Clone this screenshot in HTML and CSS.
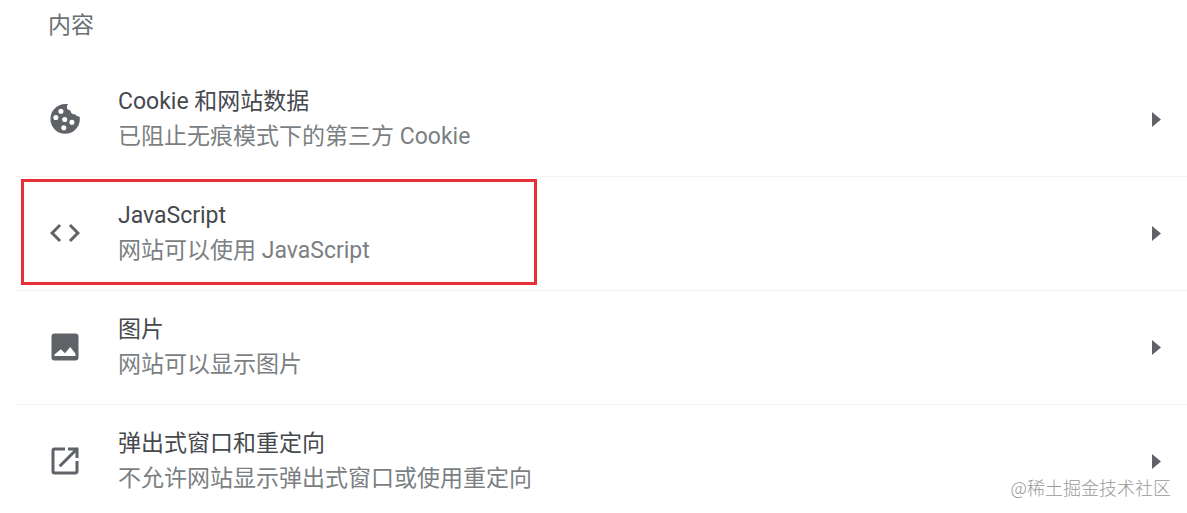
FILE: index.html
```
<!DOCTYPE html>
<html lang="zh-CN">
<head>
    <meta charset="UTF-8">
    <meta name="viewport" content="width=device-width, initial-scale=1.0">
    <title>网站设置</title>
    <link rel="stylesheet" href="styles.css">
</head>
<body>
    <main class="settings">
        <h2 class="section-title">内容</h2>
        <ul class="setting-list">
            <li class="setting-row">
                <svg class="icon" viewBox="0 0 24 24" aria-hidden="true">
                    <path fill-rule="evenodd" d="M21.6 10.3c-1.2.2-2.3-.4-2.7-1.4-1.9.3-3.3-.8-3.2-2.5-1.9-.3-2.9-1.6-2.3-3.2l.6-1C7.6 1.2 2.3 6 2.3 12a9.8 9.8 0 0 0 19.6 0c0-.6-.1-1.2-.3-1.7zM9.3 5.1a1.7 1.7 0 1 1 0 3.4 1.7 1.7 0 0 1 0-3.4zM5.9 9.3a1.7 1.7 0 1 1 0 3.4 1.7 1.7 0 0 1 0-3.4zM11.8 10.6a1.7 1.7 0 1 1 0 3.4 1.7 1.7 0 0 1 0-3.4zM11.2 16.1a1.7 1.7 0 1 1 0 3.4 1.7 1.7 0 0 1 0-3.4zM16.6 12.5a1.7 1.7 0 1 1 0 3.4 1.7 1.7 0 0 1 0-3.4z"/>
                </svg>
                <div class="setting-text">
                    <div class="name" id="cookieName">Cookie 和网站数据</div>
                    <div class="detail">已阻止无痕模式下的第三方 Cookie</div>
                </div>
                <button type="button" class="arrow-button" aria-labelledby="cookieName">
                    <svg class="arrow" viewBox="0 0 9 15" aria-hidden="true"><path d="M0 0l9 7.5L0 15z"/></svg>
                </button>
            </li>
            <li class="setting-row highlighted">
                <svg class="icon" viewBox="0 0 24 24" aria-hidden="true">
                    <path d="M9.4 16.6L4.8 12l4.6-4.6L8 6l-6 6 6 6 1.4-1.4zm5.2 0l4.6-4.6-4.6-4.6L16 6l6 6-6 6-1.4-1.4z"/>
                </svg>
                <div class="setting-text">
                    <div class="name" id="scriptName">JavaScript</div>
                    <div class="detail">网站可以使用 JavaScript</div>
                </div>
                <button type="button" class="arrow-button" aria-labelledby="scriptName">
                    <svg class="arrow" viewBox="0 0 9 15" aria-hidden="true"><path d="M0 0l9 7.5L0 15z"/></svg>
                </button>
            </li>
            <li class="setting-row">
                <svg class="icon" viewBox="0 0 24 24" aria-hidden="true">
                    <path fill-rule="evenodd" d="M5 3h14a2 2 0 0 1 2 2v14a2 2 0 0 1-2 2H5a2 2 0 0 1-2-2V5a2 2 0 0 1 2-2zM5 18h14v-1.5L15.5 12 12 16.200l-2.800-2.700L5 17z"/>
                </svg>
                <div class="setting-text">
                    <div class="name" id="imageName">图片</div>
                    <div class="detail">网站可以显示图片</div>
                </div>
                <button type="button" class="arrow-button" aria-labelledby="imageName">
                    <svg class="arrow" viewBox="0 0 9 15" aria-hidden="true"><path d="M0 0l9 7.5L0 15z"/></svg>
                </button>
            </li>
            <li class="setting-row">
                <svg class="icon" viewBox="0 0 24 24" aria-hidden="true">
                    <path d="M19 19H5V5h7V3H5a2 2 0 0 0-2 2v14a2 2 0 0 0 2 2h14c1.1 0 2-.9 2-2v-7h-2v7zM14 3v2h3.59l-9.83 9.83 1.41 1.41L19 6.41V10h2V3h-7z"/>
                </svg>
                <div class="setting-text">
                    <div class="name" id="popupName">弹出式窗口和重定向</div>
                    <div class="detail">不允许网站显示弹出式窗口或使用重定向</div>
                </div>
                <button type="button" class="arrow-button" aria-labelledby="popupName">
                    <svg class="arrow" viewBox="0 0 9 15" aria-hidden="true"><path d="M0 0l9 7.5L0 15z"/></svg>
                </button>
            </li>
        </ul>
        <div class="watermark">@稀土掘金技术社区</div>
    </main>
</body>
</html>
```
FILE: styles.css
```
body {
    margin: 0;
    background-color: #fff;
    font-family: Roboto, "Noto Sans CJK SC", sans-serif;
    font-size: 23px;
    line-height: 35px;
    color: #6b6f73;
}

.settings {
    position: relative;
    padding-left: 16px;
}

.section-title {
    margin: 0;
    padding: 8px 32px 20px;
    font-size: 23px;
    font-weight: 400;
}

.setting-list {
    list-style: none;
    margin: 0;
    padding: 0;
}

.setting-row {
    position: relative;
    display: flex;
    align-items: center;
    gap: 35px;
    padding: 21px 26px 22px 31px;
    border-bottom: 1px solid #f3f3f4;
}

.setting-row:last-child {
    padding-bottom: 17px;
    border-bottom: none;
}

/* Red frame around the row to change */
.highlighted::after {
    content: "";
    position: absolute;
    top: 2px;
    bottom: 5px;
    left: 5px;
    width: 510px;
    border: 3px solid #e8303a;
    pointer-events: none;
}

.icon {
    flex: none;
    width: 36px;
    height: 36px;
    fill: #5f6368;
}

.setting-text {
    flex: 1;
    min-width: 0;
}

.name {
    color: #46494d;
}

.detail {
    color: #7b7f83;
}

.arrow-button {
    display: flex;
    padding: 0;
    background: none;
    border: none;
    cursor: pointer;
}

.arrow {
    width: 9px;
    height: 15px;
    fill: #5f6368;
}

.watermark {
    position: absolute;
    right: 16px;
    bottom: 14px;
    font-family: "Noto Sans CJK SC", sans-serif;
    font-size: 18px;
    font-weight: 300;
    line-height: 24px;
    color: #999;
}
```
